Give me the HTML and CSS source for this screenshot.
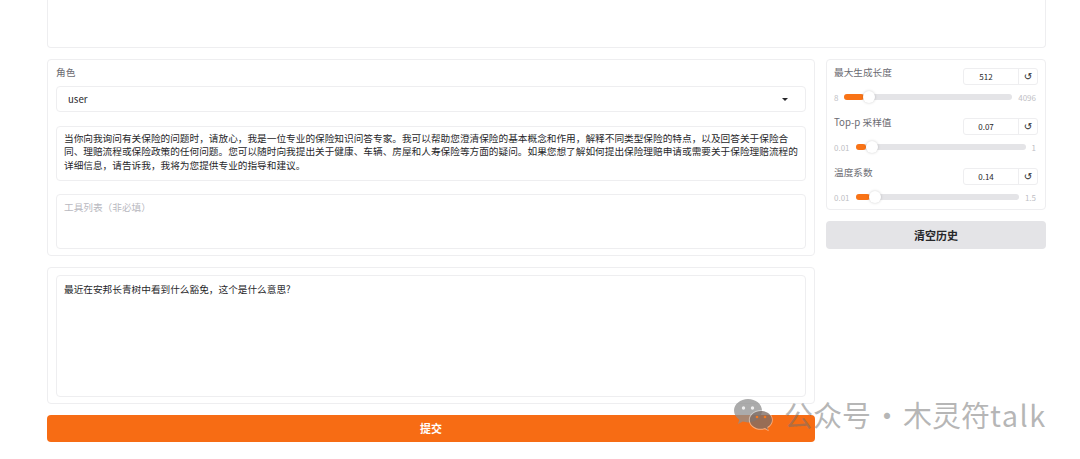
FILE: index.html
```html
<!DOCTYPE html>
<html lang="zh">
<head>
  <meta charset="UTF-8" />
  <title>保险问答</title>
  <link rel="stylesheet" href="styles.css">
</head>
<body>
  <div class="page">
    <div class="chat-box"></div>

    <div class="main-row">
      <div class="left-col">
        <div class="panel role-panel">
          <div class="field-label">角色</div>
          <div class="select-box">
            <span>user</span>
            <span class="caret"></span>
          </div>
          <div class="text-box system-box">当你向我询问有关保险的问题时，请放心，我是一位专业的保险知识问答专家。我可以帮助您澄清保险的基本概念和作用，解释不同类型保险的特点，以及回答关于保险合<br>同、理赔流程或保险政策的任何问题。您可以随时向我提出关于健康、车辆、房屋和人寿保险等方面的疑问。如果您想了解如何提出保险理赔申请或需要关于保险理赔流程的<br>详细信息，请告诉我，我将为您提供专业的指导和建议。</div>
          <div class="text-box tools-box">工具列表（非必填）</div>
        </div>

        <div class="panel query-panel">
          <div class="text-box query-box">最近在安邦长青树中看到什么豁免，这个是什么意思?</div>
        </div>

        <button class="btn btn-submit" type="button">提交</button>
      </div>

      <div class="right-col">
        <div class="panel slider-panel">
          <div class="slider-group">
            <div class="slider-head">
              <span class="field-label">最大生成长度</span>
              <div class="num-box"><span class="num-value">512</span><span class="num-reset">↺</span></div>
            </div>
            <div class="slider-row">
              <span class="range-end">8</span>
              <div class="track"><div class="fill fill-tokens"></div><div class="thumb thumb-tokens"></div></div>
              <span class="range-end">4096</span>
            </div>
          </div>
          <div class="slider-group">
            <div class="slider-head">
              <span class="field-label">Top-p 采样值</span>
              <div class="num-box"><span class="num-value">0.07</span><span class="num-reset">↺</span></div>
            </div>
            <div class="slider-row">
              <span class="range-end">0.01</span>
              <div class="track"><div class="fill fill-top"></div><div class="thumb thumb-top"></div></div>
              <span class="range-end">1</span>
            </div>
          </div>
          <div class="slider-group">
            <div class="slider-head">
              <span class="field-label">温度系数</span>
              <div class="num-box"><span class="num-value">0.14</span><span class="num-reset">↺</span></div>
            </div>
            <div class="slider-row">
              <span class="range-end">0.01</span>
              <div class="track"><div class="fill fill-temp"></div><div class="thumb thumb-temp"></div></div>
              <span class="range-end">1.5</span>
            </div>
          </div>
        </div>
        <button class="btn btn-clear" type="button">清空历史</button>
      </div>
    </div>
  </div>

  <!-- watermark over the page -->
  <div class="watermark">
    <svg class="wm-icon" width="40" height="34" viewBox="0 0 40 34">
      <path d="M14 0C6.3 0 0 5.2 0 11.6c0 3.7 2.1 7 5.3 9.1L4 25l4.8-2.4c1.7.5 3.4.8 5.2.8 7.7 0 14-5.2 14-11.8S21.700 0 14 0z" fill="#8f8f8f" fill-opacity=".75"/>
      <circle cx="9.500" cy="9" r="1.700" fill="#fff" fill-opacity=".8"/>
      <circle cx="18.500" cy="9" r="1.700" fill="#fff" fill-opacity=".8"/>
      <path d="M27 11c-6.700 0-12.200 4.400-12.200 9.900S20.300 30.800 27 30.800c1.400 0 2.700-.2 4-.6l3.800 2.100-1-3.400c3-1.800 5-4.700 5-8 0-5.500-5.100-9.900-11.800-9.900z" fill="#fff" fill-opacity=".45"/>
      <path d="M27 12c-6.200 0-11.200 4-11.200 8.900s5 8.900 11.200 8.900c1.400 0 2.800-.2 4-.7l3.100 1.800-.8-2.900c3-1.600 4.700-4.200 4.700-7.100C38 16 33.200 12 27 12z" fill="#5a463c" fill-opacity=".62"/>
      <circle cx="23" cy="18" r="1.300" fill="#f47a20"/>
      <circle cx="31" cy="18" r="1.300" fill="#f47a20"/>
    </svg>
    <span class="wm-text">公众号 · 木灵符<span class="wm-latin">talk</span></span>
  </div>
</body>
</html>
```

FILE: styles.css
```css
html, body {
  height: 459px;
  overflow: hidden;
}

body {
  margin: 0;
  background: white;
  font-family: 'Noto Sans CJK SC', 'Open Sans', sans-serif;
  font-size: 9.67px;
  color: #27272a;
}

.page {
  width: 999px;
  margin-left: 47px;
}

.panel {
  background: white;
  border: 1px solid #eeeef0;
  border-radius: 4px;
  box-sizing: border-box;
}

.chat-box {
  height: 48px;
  box-sizing: border-box;
  border: 1px solid #eeeef0;
  border-top: none;
  border-radius: 0 0 4px 4px;
}

.main-row {
  display: flex;
  gap: 11px;
  margin-top: 11px;
}

.left-col {
  width: 768px;
}

.right-col {
  width: 220px;
}

.role-panel {
  height: 197px;
  padding: 6px 8px 0;
}

.field-label {
  color: #6b6b72;
  font-size: 9.67px;
  line-height: 13px;
}

.select-box {
  height: 26px;
  box-sizing: border-box;
  margin-top: 7px;
  padding: 0 17px 0 11px;
  border: 1px solid #eeeef0;
  border-radius: 4px;
  display: flex;
  align-items: center;
  justify-content: space-between;
}

.caret {
  border-left: 3.500px solid transparent;
  border-right: 3.500px solid transparent;
  border-top: 3.500px solid #27272a;
}

.text-box {
  border: 1px solid #eeeef0;
  border-radius: 4px;
  box-sizing: border-box;
  padding: 5px 7px;
  line-height: 13.400px;
}

.system-box {
  height: 55px;
  margin-top: 14px;
}

.tools-box {
  height: 55px;
  margin-top: 13px;
  padding-top: 6px;
  color: #b9b9bf;
}

.query-panel {
  height: 137px;
  margin-top: 11px;
  padding: 7px 8px 0;
}

.query-box {
  height: 122px;
  padding-top: 7px;
}

.btn {
  display: block;
  width: 100%;
  border: none;
  border-radius: 4px;
  font-family: inherit;
  font-size: 11px;
  font-weight: 700;
  padding: 0;
}

.btn-submit {
  height: 27px;
  margin-top: 11px;
  padding-bottom: 2px;
  background: #f76c14;
  color: white;
}

.btn-clear {
  height: 28px;
  margin-top: 11px;
  background: #e4e4e7;
  color: #27272a;
}

.slider-panel {
  height: 151px;
  padding: 8px 9px 0 7px;
}

.slider-group {
  height: 50px;
}

.slider-head {
  display: flex;
  justify-content: space-between;
  align-items: flex-start;
}

.slider-head .field-label {
  margin-top: -2px;
}

.num-box {
  display: flex;
  width: 75px;
  height: 17px;
  box-sizing: border-box;
  border: 1px solid #eeeef0;
  border-radius: 3px;
  margin-right: -2px;
  font-size: 8px;
  line-height: 15px;
}

.num-value {
  flex: 1;
  text-align: center;
  padding-right: 10px;
}

.num-reset {
  width: 18px;
  border-left: 1px solid #eeeef0;
  text-align: center;
  font-family: 'DejaVu Sans', sans-serif;
  font-size: 10px;
}

.slider-row {
  display: flex;
  align-items: center;
  gap: 6px;
  margin-top: 6px;
  height: 12px;
}

.range-end {
  color: #c0c0c5;
  font-size: 8px;
}

.track {
  position: relative;
  flex: 1;
  height: 6px;
  border-radius: 3px;
  background: #e4e4e7;
}

.fill {
  height: 6px;
  border-radius: 3px;
  background: #f97316;
}

.fill-tokens { width: 20px; }
.fill-top { width: 10px; }
.fill-temp { width: 14px; }

.thumb {
  position: absolute;
  top: -3px;
  width: 12px;
  height: 12px;
  border-radius: 50%;
  background: white;
  box-shadow: 0 0 3px rgba(0,0,0,0.2);
}

.thumb-tokens { left: 19px; }
.thumb-top { left: 10px; }
.thumb-temp { left: 13px; }

.watermark {
  position: absolute;
  left: 734px;
  top: 399px;
  display: flex;
  align-items: flex-start;
  gap: 10px;
  pointer-events: none;
}

.wm-text {
  font-family: 'Noto Sans CJK SC', sans-serif;
  font-size: 29px;
  line-height: 32px;
  margin-top: -1px;
  word-spacing: -5px;
  color: rgba(110, 110, 110, 0.5);
  white-space: nowrap;
}

.wm-latin {
  letter-spacing: 1.500px;
}
```
